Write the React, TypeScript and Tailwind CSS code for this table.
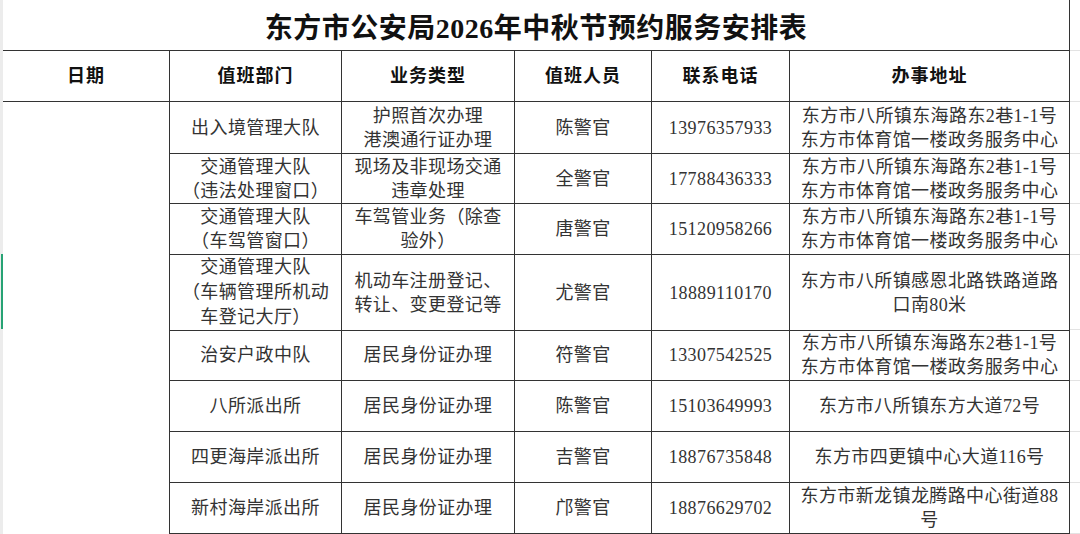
import React from 'react';

const font = "font-['Liberation_Serif','Noto_Sans_CJK_SC',serif]";

const headers = ['日期', '值班部门', '业务类型', '值班人员', '联系电话', '办事地址'];

const addrMain = ['东方市八所镇东海路东2巷1-1号', '东方市体育馆一楼政务服务中心'];

const rows = [
  { h: 'h-[52px]', dept: ['出入境管理大队'], biz: ['护照首次办理', '港澳通行证办理'], name: '陈警官', tel: '13976357933', addr: addrMain },
  { h: 'h-[50px]', dept: ['交通管理大队', '（违法处理窗口）'], biz: ['现场及非现场交通', '违章处理'], name: '全警官', tel: '17788436333', addr: addrMain },
  { h: 'h-[51px]', dept: ['交通管理大队', '（车驾管窗口）'], biz: ['车驾管业务（除查', '验外）'], name: '唐警官', tel: '15120958266', addr: addrMain },
  { h: 'h-[75px]', dept: ['交通管理大队', '（车辆管理所机动', '车登记大厅）'], biz: ['机动车注册登记、', '转让、变更登记等'], name: '尤警官', tel: '18889110170', addr: ['东方市八所镇感恩北路铁路道路', '口南80米'] },
  { h: 'h-[51px]', dept: ['治安户政中队'], biz: ['居民身份证办理'], name: '符警官', tel: '13307542525', addr: addrMain },
  { h: 'h-[51px]', dept: ['八所派出所'], biz: ['居民身份证办理'], name: '陈警官', tel: '15103649993', addr: ['东方市八所镇东方大道72号'] },
  { h: 'h-[51px]', dept: ['四更海岸派出所'], biz: ['居民身份证办理'], name: '吉警官', tel: '18876735848', addr: ['东方市四更镇中心大道116号'] },
  { h: 'h-[51px]', dept: ['新村海岸派出所'], biz: ['居民身份证办理'], name: '邝警官', tel: '18876629702', addr: ['东方市新龙镇龙腾路中心街道88', '号'] },
];

const Cell = ({ lines }: { lines: string[] }) => (
  <div
    className={`flex flex-col items-center justify-center border-r border-b border-[#333] text-center ${
      lines.length > 2 ? 'leading-[25px]' : 'leading-[24px]'
    }`}
  >
    {lines.map((l, i) => (
      <span key={i} className="whitespace-nowrap">{l}</span>
    ))}
  </div>
);

export default function App() {
  return (
    <div className={`${font} flex w-[1080px] h-[534px] overflow-hidden bg-white text-[18px] tracking-[0.4px] text-[#333]`}>
      {/* spreadsheet row gutter */}
      <div className="flex w-[3px] flex-col bg-[#ececec]">
        <div className="h-[254px]" />
        <div className="h-[75px] border-l border-[#ececec] bg-[#27a374]" />
        <div className="flex-1" />
      </div>

      <div className="flex w-[1067px] flex-col">
        {/* title */}
        <div className="flex h-[51px] items-center justify-center border-r border-b border-[#333] pt-[8px] text-[28px] font-bold tracking-[0.5px] text-[#111]">
          东方市公安局2026年中秋节预约服务安排表
        </div>

        {/* header */}
        <div className="grid h-[51px] grid-cols-[167px_172px_173px_137px_138px_280px] font-bold tracking-[1px] text-[#111]">
          {headers.map((h) => (
            <div key={h} className="flex items-center justify-center border-r border-b border-[#333]">
              {h}
            </div>
          ))}
        </div>

        {/* body */}
        <div className="flex flex-1">
          <div className="w-[167px] border-r border-[#333]" />
          <div className="flex flex-1 flex-col">
            {rows.map((r, i) => (
              <div key={i} className={`grid ${r.h} grid-cols-[172px_173px_137px_138px_280px]`}>
                <Cell lines={r.dept} />
                <Cell lines={r.biz} />
                <Cell lines={[r.name]} />
                <Cell lines={[r.tel]} />
                <Cell lines={r.addr} />
              </div>
            ))}
          </div>
        </div>
      </div>

      {/* sheet gridlines beyond the table */}
      <div className="flex flex-1 flex-col">
        <div className="h-[51px] border-b border-[#e3e3e3]" />
        <div className="h-[51px] border-b border-[#e3e3e3]" />
        {rows.map((r, i) => (
          <div key={i} className={`${r.h} border-b border-[#e3e3e3]`} />
        ))}
      </div>
    </div>
  );
}
